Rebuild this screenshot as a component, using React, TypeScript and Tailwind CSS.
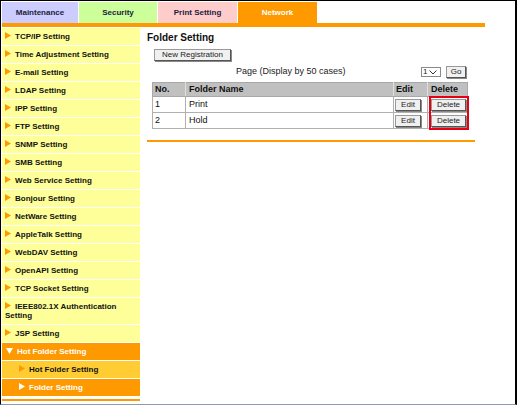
import React from "react";

const font = { fontFamily: '"Liberation Sans", Arial, sans-serif' };

const menu = [
  "TCP/IP Setting",
  "Time Adjustment Setting",
  "E-mail Setting",
  "LDAP Setting",
  "IPP Setting",
  "FTP Setting",
  "SNMP Setting",
  "SMB Setting",
  "Web Service Setting",
  "Bonjour Setting",
  "NetWare Setting",
  "AppleTalk Setting",
  "WebDAV Setting",
  "OpenAPI Setting",
  "TCP Socket Setting",
  "IEEE802.1X Authentication Setting",
  "JSP Setting",
];

function Arrow({ color, down }: { color: string; down?: boolean }) {
  return down ? (
    <svg width="7" height="6" viewBox="0 0 7 6" className="inline-block mr-[4px] align-[0px]">
      <path d="M0 0 L7 0 L3.5 6 Z" fill={color} />
    </svg>
  ) : (
    <svg width="6" height="7" viewBox="0 0 6 7" className="inline-block mr-[4px] align-[0px]">
      <path d="M0 0 L6 3.5 L0 7 Z" fill={color} />
    </svg>
  );
}

function Btn({ children, className = "" }: { children: React.ReactNode; className?: string }) {
  return (
    <div
      className={
        "flex items-center justify-center bg-[#f0f0f0] border border-[#9a9a9a] border-r-[#555] border-b-[#555] shadow-[1px_1px_0_#888] text-[8px] leading-none text-[#222] " +
        className
      }
    >
      {children}
    </div>
  );
}

export default function App() {
  return (
    <div
      style={font}
      className="w-[517px] h-[405px] bg-white border-l border-t border-r-2 border-black border-b border-b-[#8e9ab4] p-[1px] overflow-hidden"
    >
      {/* tabs */}
      <div className="flex gap-[1px] h-[21px] text-[8px] font-bold">
        <div className="w-[76px] bg-[#ccccff] text-[#1c1c3c] flex items-center justify-center">Maintenance</div>
        <div className="w-[78px] bg-[#ccff99] text-[#1c1c3c] flex items-center justify-center">Security</div>
        <div className="w-[79px] bg-[#ffcccc] text-[#1c1c3c] flex items-center justify-center">Print Setting</div>
        <div className="w-[79px] bg-[#ff9900] text-white flex items-center justify-center">Network</div>
      </div>
      <div className="w-[483px] h-[4px] bg-[#ff9900]" />

      <div className="flex mt-[1px]">
        {/* sidebar */}
        <div className="w-[138px] shrink-0">
          <div className="flex flex-col gap-[1px] text-[8px] font-bold leading-[9px]">
            {menu.map((m) => (
              <div key={m} className="bg-[#ffff99] px-[3px] pt-[4px] pb-[4px] text-[#111]">
                <Arrow color="#ff9900" />
                {m}
              </div>
            ))}
            <div className="bg-[#ff9900] px-[4px] py-[4px] text-white">
              <Arrow color="#ffffff" down />
              Hot Folder Setting
            </div>
            <div className="bg-[#ffcc33] pl-[17px] py-[4px] text-[#111]">
              <Arrow color="#ff9900" />
              Hot Folder Setting
            </div>
            <div className="bg-[#ff9900] pl-[17px] py-[4px] text-white">
              <Arrow color="#ffffff" />
              Folder Setting
            </div>
          </div>
          <div className="mt-[3px] h-[2px] bg-[#ff9900]" />
        </div>

        {/* main */}
        <div className="pl-[7px]">
          <div className="mt-[4px] text-[10px] leading-[12px] font-bold text-[#111]">Folder Setting</div>
          <div className="pl-[5px]">
            <Btn className="ml-[2px] mt-[5px] w-[77px] h-[12px]">New Registration</Btn>

            <div className="flex items-center mt-[5px] h-[12px] w-[316px]">
              <div className="pl-[84px] text-[9px] text-[#222] flex-1">Page (Display by 50 cases)</div>
              <div className="w-[20px] h-[10px] border border-[#8a8a8a] bg-white flex items-center text-[8px] leading-none text-[#222] pl-[1px]">
                1
                <svg width="8" height="5" viewBox="0 0 8 5" className="ml-[2px]">
                  <path d="M0.5 0.5 L4 4 L7.5 0.5" fill="none" stroke="#333" strokeWidth="1" />
                </svg>
              </div>
              <Btn className="ml-[5px] mr-[2px] w-[20px] h-[12px]">Go</Btn>
            </div>

            <div className="relative mt-[4px] w-[316px]">
              <table className="w-[316px] border-collapse text-[9px] leading-none text-[#111]">
                <thead>
                  <tr className="bg-[#c0c0c0] h-[14px] font-bold">
                    <th className="w-[33px] border border-[#a8a8a8] border-r-[#e0e0e0] text-left pl-[2px] font-bold">No.</th>
                    <th className="w-[208px] border border-[#a8a8a8] border-r-[#e0e0e0] text-left pl-[3px] font-bold">Folder Name</th>
                    <th className="w-[34px] border border-[#a8a8a8] border-r-[#e0e0e0] text-left pl-[2px] font-bold">Edit</th>
                    <th className="border border-[#a8a8a8] text-left pl-[3px] font-bold">Delete</th>
                  </tr>
                </thead>
                <tbody>
                  {[
                    ["1", "Print"],
                    ["2", "Hold"],
                  ].map(([n, name]) => (
                    <tr key={n} className="h-[16px]">
                      <td className="border border-[#b0b0b0] pl-[2px]">{n}</td>
                      <td className="border border-[#b0b0b0] pl-[3px]">{name}</td>
                      <td className="border border-[#b0b0b0]">
                        <Btn className="ml-[1px] w-[26px] h-[12px]">Edit</Btn>
                      </td>
                      <td className="border border-[#b0b0b0]">
                        <Btn className="ml-[3px] w-[35px] h-[12px]">Delete</Btn>
                      </td>
                    </tr>
                  ))}
                </tbody>
              </table>
              {/* highlight annotation */}
              <div className="absolute left-[277px] top-[14px] w-[40px] h-[34px] border-2 border-[#e60012]" />
            </div>
          </div>
          <div className="mt-[11px] w-[328px] h-[2px] bg-[#ff9900]" />
        </div>
      </div>
    </div>
  );
}
